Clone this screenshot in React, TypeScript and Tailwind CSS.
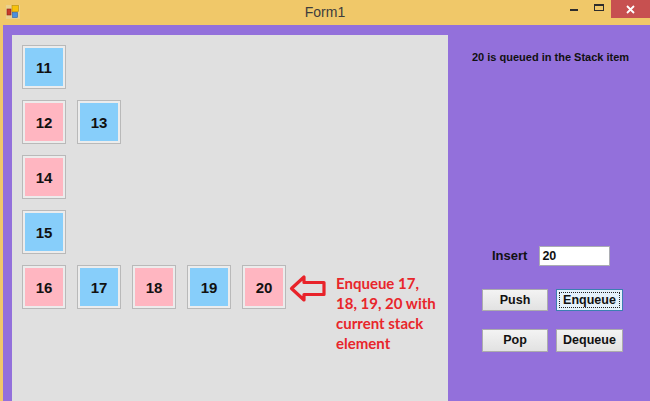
import React from "react";

const BLUE = "bg-[#87cefa]";
const PINK = "bg-[#ffb6c1]";

function Box({ n, color }: { n: number; color: string }) {
  return (
    <div className="w-[44px] h-[44px] border border-[#b9b9b9] bg-[#ececec] p-[2px] shrink-0">
      <div
        className={`w-full h-full ${color} flex items-center justify-center text-[15px] font-bold text-[#111] leading-none`}
        style={{ fontFamily: '"Liberation Sans", Arial, sans-serif' }}
      >
        {n}
      </div>
    </div>
  );
}

function Btn({ label, focused, h }: { label: string; focused?: boolean; h: string }) {
  if (focused) {
    return (
      <div className={`w-[67px] ${h} border border-[#3c7fb1] bg-[#e5f1fb] p-[2px]`}>
        <div className="w-full h-full border border-dotted border-[#222] flex items-center justify-center text-[12.5px] font-bold text-[#111]">
          {label}
        </div>
      </div>
    );
  }
  return (
    <div
      className={`${h} border border-[#acacac] bg-gradient-to-b from-[#f3f3f3] to-[#e2e2e2] flex items-center justify-center text-[12.5px] font-bold text-[#111]`}
    >
      {label}
    </div>
  );
}

export default function App() {
  return (
    <div
      className="w-[650px] h-[401px] overflow-hidden flex flex-col bg-[#f0c869]"
      style={{ fontFamily: '"Liberation Sans", Arial, sans-serif' }}
    >
      {/* Title bar */}
      <div className="h-[25px] shrink-0 grid grid-cols-[1fr_auto_1fr] items-start">
        <div className="pt-[5px] pl-[6px]">
          <svg width="14" height="14" viewBox="0 0 14 14">
            <rect x="0" y="0" width="14" height="14" fill="#e6d6a8" opacity="0.6" />
            <rect x="1" y="4" width="4" height="6" fill="#c83a2a" stroke="#8a2418" strokeWidth="0.6" />
            <rect x="6" y="0.5" width="6.5" height="6" fill="#f7c20a" stroke="#b88a00" strokeWidth="0.6" />
            <rect x="6.5" y="7.5" width="5" height="5" fill="#4a8fe0" stroke="#2a5fa8" strokeWidth="0.6" />
          </svg>
        </div>
        <div className="pt-[4px] text-[14px] leading-[17px] text-[#3d3d3d]">Form1</div>
        <div className="flex justify-end items-start">
          <div className="w-[8px] h-[2px] bg-[#2d2d2d] mt-[9px]" />
          <div className="w-[10px] h-[7px] border border-t-2 border-[#2d2d2d] mt-[4px] ml-[16px]" />
          <div className="w-[39px] h-[18px] bg-[#c75050] ml-[7px] flex items-center justify-center">
            <svg width="9" height="9" viewBox="0 0 9 9">
              <path d="M1 1 L8 8 M8 1 L1 8" stroke="#ffffff" strokeWidth="1.8" />
            </svg>
          </div>
        </div>
      </div>

      {/* Body */}
      <div className="flex-1 flex min-h-0">
        <div className="w-[3px] bg-[#f0c869] shrink-0" />
        <div className="flex-1 bg-[#9370db] flex pl-[9px] pt-[10px] min-h-0">
          {/* Gray panel */}
          <div className="w-[436px] h-full bg-[#e0e0e0] p-[10px] flex flex-col gap-[11px] shrink-0">
            <div className="flex gap-[11px]">
              <Box n={11} color={BLUE} />
            </div>
            <div className="flex gap-[11px]">
              <Box n={12} color={PINK} />
              <Box n={13} color={BLUE} />
            </div>
            <div className="flex gap-[11px]">
              <Box n={14} color={PINK} />
            </div>
            <div className="flex gap-[11px]">
              <Box n={15} color={BLUE} />
            </div>
            <div className="flex items-start">
              <div className="flex gap-[11px]">
                <Box n={16} color={PINK} />
                <Box n={17} color={BLUE} />
                <Box n={18} color={PINK} />
                <Box n={19} color={BLUE} />
                <Box n={20} color={PINK} />
              </div>
              <svg width="38" height="30" viewBox="0 0 38 30" className="ml-[3px] mt-[9px] shrink-0">
                <path
                  d="M2.5 14.5 L15 3 L15 8.5 L35 8.5 L35 20.5 L15 20.5 L15 26 Z"
                  fill="none"
                  stroke="#e8232a"
                  strokeWidth="3.2"
                  strokeLinejoin="round"
                />
              </svg>
              <div
                className="ml-[9px] mt-[8px] text-[15px] leading-[20px] font-bold text-[#e8262b]"
                style={{ fontFamily: 'Lato, "Liberation Sans", sans-serif' }}
              >
                Enqueue 17,
                <br />
                18, 19, 20 with
                <br />
                current stack
                <br />
                element
              </div>
            </div>
          </div>

          {/* Right column */}
          <div className="flex-1 flex flex-col -mt-[10px]">
            <div className="mt-[25px] ml-[24px] text-[11px] leading-[14px] font-bold text-[#111] whitespace-nowrap">
              20 is queued in the Stack item
            </div>
            <div className="mt-[182px] ml-[44px] flex items-center">
              <div className="text-[13px] font-bold text-[#111]">Insert</div>
              <div className="ml-[12px] w-[71px] h-[20px] bg-white border border-[#abadb3] flex items-center pl-[2px] text-[12.5px] font-bold text-[#111]">
                20
              </div>
            </div>
            <div className="mt-[23px] ml-[34px] flex gap-[8px]">
              <div className="w-[66px]">
                <Btn label="Push" h="h-[22px]" />
              </div>
              <Btn label="Enqueue" h="h-[22px]" focused />
            </div>
            <div className="mt-[18px] ml-[34px] flex gap-[8px]">
              <div className="w-[66px]">
                <Btn label="Pop" h="h-[23px]" />
              </div>
              <div className="w-[67px]">
                <Btn label="Dequeue" h="h-[23px]" />
              </div>
            </div>
          </div>
        </div>
      </div>
    </div>
  );
}
